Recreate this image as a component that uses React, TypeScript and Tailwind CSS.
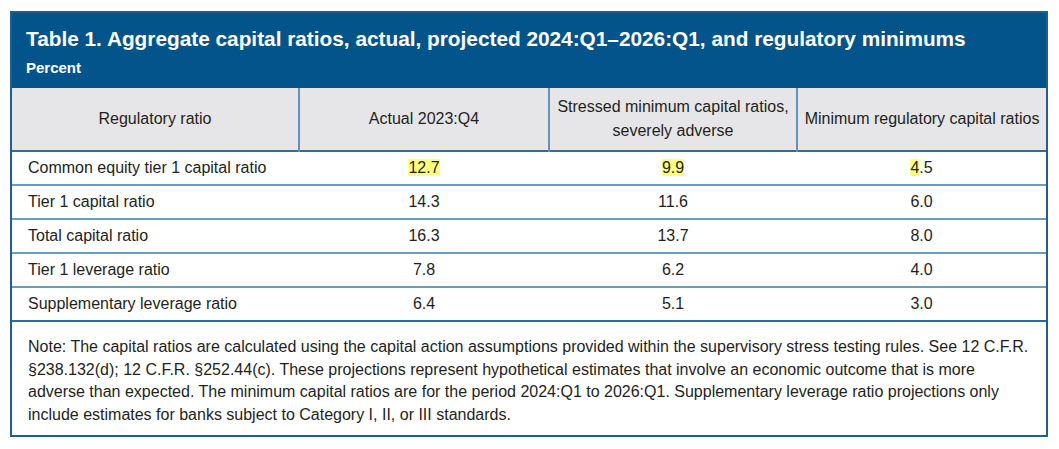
const rows = [
  { label: "Common equity tier 1 capital ratio", actual: "12.7", stressed: "9.9", minimum: "4.5", mark: true },
  { label: "Tier 1 capital ratio", actual: "14.3", stressed: "11.6", minimum: "6.0" },
  { label: "Total capital ratio", actual: "16.3", stressed: "13.7", minimum: "8.0" },
  { label: "Tier 1 leverage ratio", actual: "7.8", stressed: "6.2", minimum: "4.0" },
  { label: "Supplementary leverage ratio", actual: "6.4", stressed: "5.1", minimum: "3.0" },
];

const Hi = ({ children }: { children: React.ReactNode }) => (
  <span className="bg-[#ffff80]">{children}</span>
);

export default function App() {
  return (
    <div className="bg-white min-h-screen pt-[11px] pl-[10px] font-['Liberation_Sans',Arial,sans-serif] text-[#231f20]">
      <div className="w-[1038px] border-2 border-[#1d5e93] bg-white">
        {/* Title band */}
        <div className="bg-[#03548b] h-[75px] pl-[14px] pt-[13px] text-white">
          <h1 className="text-[20.8px] leading-[26px] font-bold">
            Table 1. Aggregate capital ratios, actual, projected 2024:Q1–2026:Q1, and regulatory minimums
          </h1>
          <p className="text-[15px] leading-[18px] font-bold mt-[7px]">Percent</p>
        </div>

        <table className="w-full border-collapse table-fixed text-[16px]">
          <colgroup>
            <col className="w-[287px]" />
            <col className="w-[250px]" />
            <col className="w-[248px]" />
            <col />
          </colgroup>
          <thead>
            <tr className="bg-[#e6e6e8] h-[63px] border-b-2 border-[#2f6c9e]">
              <th className="font-normal text-center leading-[24px] border-r-2 border-[#5f93bb]">Regulatory ratio</th>
              <th className="font-normal text-center leading-[24px] border-r-2 border-[#5f93bb]">Actual 2023:Q4</th>
              <th className="font-normal text-center leading-[24px] border-r-2 border-[#5f93bb]">
                Stressed minimum capital ratios,
                <br />
                severely adverse
              </th>
              <th className="font-normal text-center leading-[24px] whitespace-nowrap">
                Minimum regulatory capital ratios
              </th>
            </tr>
          </thead>
          <tbody>
            {rows.map((r, i) => (
              <tr
                key={r.label}
                className={`h-[34px] ${i < rows.length - 1 ? "border-b-2 border-[#6a9cc0]" : "border-b-2 border-[#2f6c9e]"}`}
              >
                <td className="pl-[16px] leading-[20px]">{r.label}</td>
                <td className="text-center leading-[20px]">{r.mark ? <Hi>{r.actual}</Hi> : r.actual}</td>
                <td className="text-center leading-[20px]">{r.mark ? <Hi>{r.stressed}</Hi> : r.stressed}</td>
                <td className="text-center leading-[20px]">
                  {r.mark ? (
                    <>
                      <Hi>4</Hi>.5
                    </>
                  ) : (
                    r.minimum
                  )}
                </td>
              </tr>
            ))}
          </tbody>
        </table>

        {/* Note */}
        <div className="pl-[16px] pr-[10px] pt-[14px] pb-[12px] h-[113px] text-[16px] leading-[22.5px]">
          <p>
            Note: The capital ratios are calculated using the capital action assumptions provided within the supervisory stress testing rules. See 12 C.F.R.
            §238.132(d); 12 C.F.R. §252.44(c). These projections represent hypothetical estimates that involve an economic outcome that is more
            adverse than expected. The minimum capital ratios are for the period 2024:Q1 to 2026:Q1. Supplementary leverage ratio projections only
            include estimates for banks subject to Category I, II, or III standards.
          </p>
        </div>
      </div>
    </div>
  );
}
